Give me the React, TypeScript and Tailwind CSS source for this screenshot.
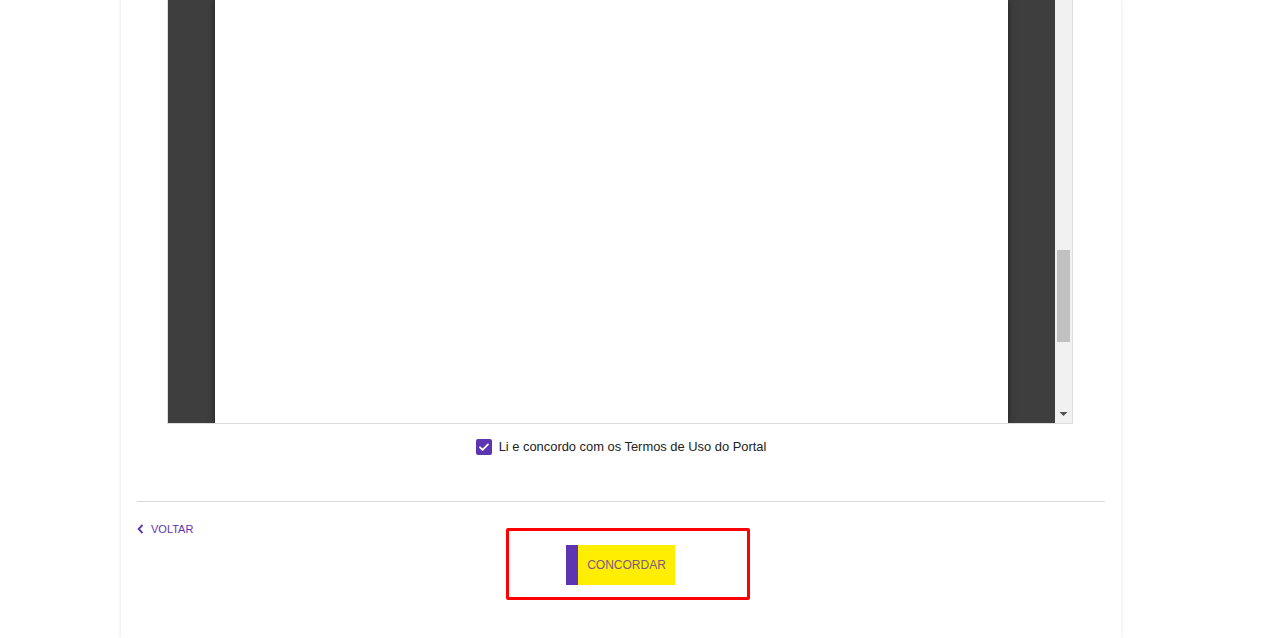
import * as React from 'react';

function PdfViewer() {
  return (
    <div className="ml-[30px] flex h-[424px] w-[906px] border-x border-b border-[#dcdcdc]">
      {/* document area */}
      <div className="flex flex-1 justify-center bg-[#3e3e3e] overflow-hidden">
        <div className="h-full w-[793px] bg-white shadow-[0_0_6px_rgba(0,0,0,0.55)]" />
      </div>
      {/* scrollbar */}
      <div className="relative w-[17px] bg-[#f1f1f1]">
        <div className="absolute left-[2px] top-[250px] h-[92px] w-[13px] bg-[#c1c1c1]" />
        <svg className="absolute bottom-[6px] left-[4px]" width="9" height="6" viewBox="0 0 9 6">
          <path d="M0.5 1h8L4.5 5z" fill="#505050" />
        </svg>
      </div>
    </div>
  );
}

export default function App() {
  return (
    <div className="min-h-[638px] w-full bg-white font-['Liberation_Sans',Arial,sans-serif]">
      <div className="ml-[121px] min-h-[638px] w-[1000px] bg-white px-4 shadow-[0_0_4px_rgba(0,0,0,0.12)]">
        <PdfViewer />

        {/* Accept checkbox */}
        <div className="mt-[13px] flex items-center justify-center gap-[7px]">
          <span className="flex h-4 w-4 items-center justify-center rounded-[2px] bg-[#5e35b1]">
            <svg width="12" height="12" viewBox="0 0 12 12">
              <path d="M2 6.3l2.6 2.6L10 3.4" fill="none" stroke="white" strokeWidth="1.8" strokeLinecap="round" strokeLinejoin="round" />
            </svg>
          </span>
          <span className="text-[12.9px] leading-5 text-[#222]">Li e concordo com os Termos de Uso do Portal</span>
        </div>

        <div className="mt-[44px] border-t border-[#d9d9d9]" />

        {/* Footer actions */}
        <div className="grid grid-cols-[1fr_auto_1fr] pt-[19px]">
          <a href="#" className="flex h-4 items-center gap-[7px] self-start text-[11px] text-[#5e35b1]">
            <svg width="7" height="10" viewBox="0 0 7 10">
              <path d="M5.5 1L1.6 5l3.9 4" fill="none" stroke="#5e35b1" strokeWidth="1.8" />
            </svg>
            VOLTAR
          </a>
          <div className="relative -ml-px mt-[24px]">
            <div className="pointer-events-none absolute -left-[60px] -top-[17px] h-[72px] w-[244px] rounded-[2px] border-[3px] border-[#ff0000]" />
            <button className="flex h-10 w-[109px] bg-[#ffee00]">
              <span className="h-full w-3 bg-[#5e35b1]" />
              <span className="flex flex-1 items-center justify-center text-[12px] text-[#7a5a8c]">CONCORDAR</span>
            </button>
          </div>
          <div />
        </div>
      </div>
    </div>
  );
}
